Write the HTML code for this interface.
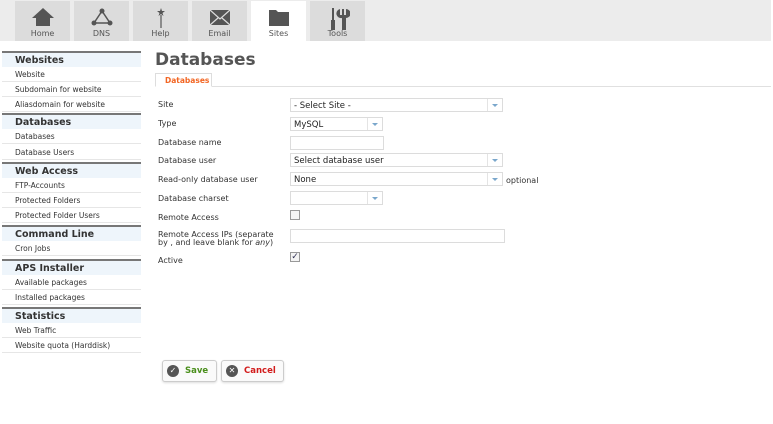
<!DOCTYPE html>
<html><head><style>
*{margin:0;padding:0;box-sizing:border-box}
body{width:773px;height:424px;background:#fff;font-family:"DejaVu Sans","Liberation Sans",sans-serif;font-size:8px;color:#333;position:relative;overflow:hidden}
.top{position:absolute;left:0;top:0;width:771px;height:41px;background:#ececec}
.tab{position:absolute;top:1px;width:55px;height:40px;background:#dcdcdc;text-align:center;color:#555;font-size:8px}
.tab span{position:absolute;left:0;right:0;top:28px}
.tab svg{position:absolute;left:50%;top:6px;transform:translateX(-50%)}
.tab.act{background:#fff}
.sb{position:absolute;left:2px;width:139px}
.h{position:absolute;left:2px;width:139px;height:16px;background:#eef5fb;border-top:2px solid #777;font-size:9.5px;font-weight:bold;color:#333;padding:2px 0 0 13px}
.i{position:absolute;left:2px;width:139px;height:15px;border-bottom:1px solid #e6e6e6;font-size:7.5px;color:#333;padding:3px 0 0 13px}
.l{position:absolute;left:158px;font-size:8px;color:#333}
.f{position:absolute;left:290px;height:14px;border:1px solid #dcdcdc;background:#fff;font-size:8.5px;padding:2px 0 0 3px;color:#222}
.f.s:after{content:"";position:absolute;right:0;top:0;width:14px;height:12px;border-left:1px solid #e4e4e4}
.f.s:before{content:"";position:absolute;right:4px;top:5px;border-left:3px solid transparent;border-right:3px solid transparent;border-top:3px solid #7aa7cc}
.cb{position:absolute;left:290px;width:10px;height:10px;border:1px solid #999;background:#f4f4f4}
.btn{position:absolute;top:360px;height:22px;border:1px solid #ccc;border-radius:3px;background:#fafafa;box-shadow:0 1px 2px #ddd;font-size:8.5px;font-weight:bold;padding:5px 0 0 22px}
.btn i{position:absolute;left:4px;top:4px;width:12px;height:12px;border-radius:50%;background:#555;color:#fff;font-style:normal;font-size:8px;text-align:center;line-height:12px}
</style></head><body>
<div class="top"></div>
<div class="tab" style="left:15px"><svg width="24" height="20" viewBox="0 0 24 20"><path d="M12 1L1 11h4v8h14v-8h4z" fill="#555"/></svg><span>Home</span></div>
<div class="tab" style="left:74px"><svg width="24" height="20" viewBox="0 0 24 20"><path d="M12 4L4 16H20Z" fill="none" stroke="#555" stroke-width="1.5"/><circle cx="12" cy="4" r="2.5" fill="#555"/><circle cx="4" cy="16" r="2.5" fill="#555"/><circle cx="20" cy="16" r="2.5" fill="#555"/></svg><span>DNS</span></div>
<div class="tab" style="left:133px"><svg width="24" height="22" viewBox="0 0 24 22"><path d="M12 1l1 3h3l-2.5 2 1 3-2.5-2-2.5 2 1-3L8 4h3z" fill="#555"/><path d="M12 8V21" stroke="#555" stroke-width="1.2"/></svg><span>Help</span></div>
<div class="tab" style="left:192px"><svg width="24" height="20" viewBox="0 0 24 20"><rect x="2" y="3" width="20" height="15" fill="#555"/><path d="M2 3l10 9 10-9M2 18l8-7M22 18l-8-7" stroke="#ddd" stroke-width="1.2" fill="none"/></svg><span>Email</span></div>
<div class="tab act" style="left:251px"><svg width="24" height="20" viewBox="0 0 24 20"><path d="M2 3h7l2 2h11v14H2z" fill="#555"/></svg><span>Sites</span></div>
<div class="tab" style="left:310px"><svg width="24" height="24" viewBox="0 0 24 24"><rect x="6" y="1" width="2" height="12" fill="#555"/><rect x="5" y="13" width="4" height="10" fill="#555"/><path d="M14 2v6h2V2l2 0v6h2V2a4 4 0 0 1 0 9v12h-4V11a4 4 0 0 1-2-9z" fill="#555"/></svg><span>Tools</span></div>

<div class="h" style="top:51px">Websites</div>
<div class="i" style="top:67px">Website</div>
<div class="i" style="top:82px">Subdomain for website</div>
<div class="i" style="top:97px">Aliasdomain for website</div>
<div class="h" style="top:113px">Databases</div>
<div class="i" style="top:129px">Databases</div>
<div class="i" style="top:145px">Database Users</div>
<div class="h" style="top:162px">Web Access</div>
<div class="i" style="top:178px">FTP-Accounts</div>
<div class="i" style="top:193px">Protected Folders</div>
<div class="i" style="top:208px">Protected Folder Users</div>
<div class="h" style="top:225px">Command Line</div>
<div class="i" style="top:241px">Cron Jobs</div>
<div class="h" style="top:259px">APS Installer</div>
<div class="i" style="top:275px">Available packages</div>
<div class="i" style="top:290px">Installed packages</div>
<div class="h" style="top:307px">Statistics</div>
<div class="i" style="top:323px">Web Traffic</div>
<div class="i" style="top:338px">Website quota (Harddisk)</div>

<div style="position:absolute;left:155px;top:50px;font-size:17px;font-weight:bold;color:#555">Databases</div>
<div style="position:absolute;left:155px;top:86px;width:616px;border-top:1px solid #e0e0e0"></div>
<div style="position:absolute;left:155px;top:73px;width:57px;height:14px;border:1px solid #ddd;border-bottom:1px solid #fff;background:#fff;color:#f26522;font-size:7.5px;font-weight:bold;padding:2px 0 0 9px">Databases</div>

<div class="l" style="top:100px">Site</div><div class="f s" style="top:98px;width:213px">- Select Site -</div>
<div class="l" style="top:119px">Type</div><div class="f s" style="top:117px;width:93px">MySQL</div>
<div class="l" style="top:138px">Database name</div><div class="f" style="top:136px;width:94px"></div>
<div class="l" style="top:156px">Database user</div><div class="f s" style="top:153px;width:213px">Select database user</div>
<div class="l" style="top:175px">Read-only database user</div><div class="f s" style="top:172px;width:213px">None</div><div class="l" style="left:506px;top:176px">optional</div>
<div class="l" style="top:194px">Database charset</div><div class="f s" style="top:191px;width:93px"></div>
<div class="l" style="top:213px">Remote Access</div><div class="cb" style="top:210px"></div>
<div class="l" style="top:231px;line-height:8px">Remote Access IPs (separate<br>by , and leave blank for <i>any</i>)</div><div class="f" style="top:229px;width:215px"></div>
<div class="l" style="top:256px">Active</div><div class="cb" style="top:252px;font-size:9px;line-height:8px;color:#335;text-align:center">✓</div>

<div class="btn" style="left:162px;width:55px;color:#4a8f1c"><i>✓</i>Save</div>
<div class="btn" style="left:221px;width:63px;color:#d21c1c"><i>✕</i>Cancel</div>
</body></html>
